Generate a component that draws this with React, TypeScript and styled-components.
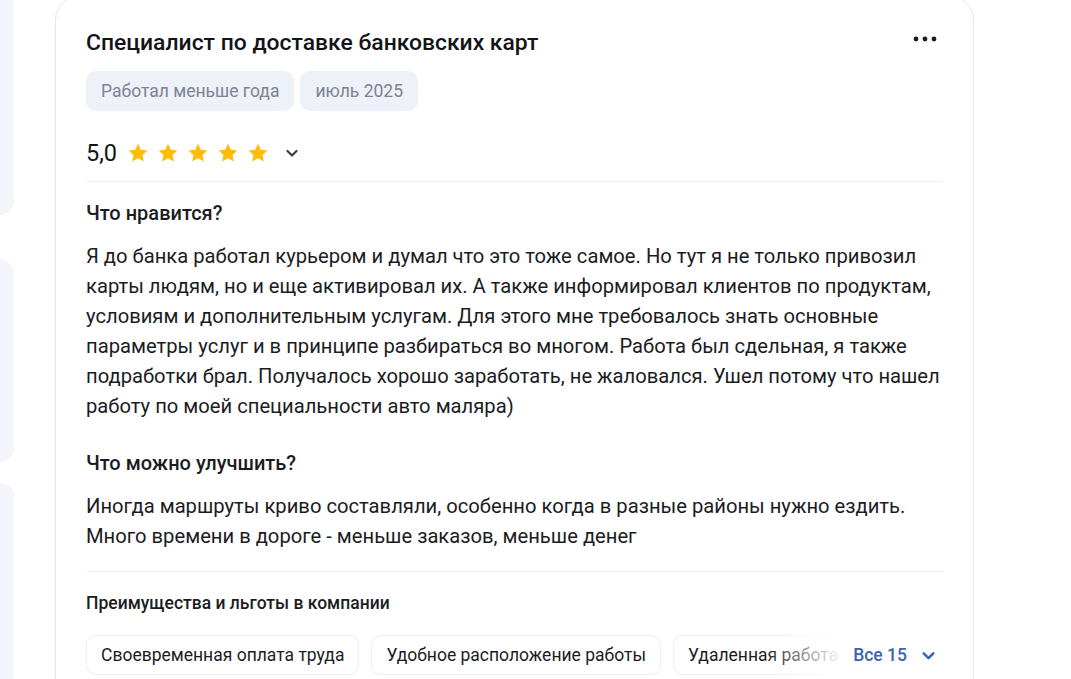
import React from "react";
import styled, { createGlobalStyle } from "styled-components";

const Global = createGlobalStyle`
  html, body { margin: 0; padding: 0; background: #ffffff; overflow: hidden; }
  body { font-family: Roboto, "Noto Sans", Arial, sans-serif; color: #1c1c1f; }
  * { box-sizing: border-box; }
`;

const Page = styled.div`
  display: flex;
  align-items: flex-start;
  gap: 41px;
  height: 679px;
  overflow: hidden;
`;

const SideColumn = styled.div`
  display: flex;
  flex-direction: column;
  width: 14px;
  margin-top: -40px;
`;

const SideCard = styled.div<{ $h: number; $gap: number }>`
  height: ${(p) => p.$h}px;
  margin-bottom: ${(p) => p.$gap}px;
  background: #f4f5fa;
  border-radius: 0 16px 16px 0;
`;

const Card = styled.div`
  width: 919px;
  margin-top: -4px;
  border: 1px solid #e2e5ec;
  border-radius: 24px;
  padding: 32px 30px 40px 30px;
  background: #fff;
`;

const Header = styled.div`
  display: flex;
  align-items: center;
  justify-content: space-between;
`;

const Title = styled.h2`
  margin: 0;
  font-size: 22.9px;
  line-height: 28px;
  font-weight: 500;
  color: #141416;
`;

const MoreButton = styled.button`
  display: flex;
  align-items: center;
  justify-content: center;
  width: 30px;
  height: 24px;
  border: 0;
  background: transparent;
  padding: 0;
  margin-top: -8px;
  margin-right: 3px;
  cursor: pointer;
`;

const Tags = styled.div`
  display: flex;
  gap: 6px;
  margin-top: 14px;
`;

const Tag = styled.span`
  display: inline-flex;
  align-items: center;
  height: 40px;
  padding: 0 15px;
  border-radius: 10px;
  background: #eef1f7;
  color: #7b8395;
  font-size: 17.5px;
`;

const RatingRow = styled.div`
  display: flex;
  align-items: center;
  height: 32px;
  margin-top: 26px;
`;

const RatingValue = styled.span`
  font-size: 23.5px;
  font-weight: 400;
  color: #141416;
  margin-right: 10px;
`;

const Stars = styled.div`
  display: flex;
  gap: 8px;
`;

const Chevron = styled.span<{ $color: string; $gap: number }>`
  display: inline-flex;
  margin-left: ${(p) => p.$gap}px;
  color: ${(p) => p.$color};
`;

const Divider = styled.div<{ $top: number }>`
  height: 1px;
  background: #eef0f4;
  margin-top: ${(p) => p.$top}px;
`;

const SectionTitle = styled.h3<{ $top: number }>`
  margin: ${(p) => p.$top}px 0 0 0;
  font-size: 20px;
  line-height: 24px;
  font-weight: 500;
  color: #1c1c1f;
`;

const Body = styled.p`
  margin: 16px 0 0 0;
  font-size: 20.2px;
  line-height: 30px;
  color: #1c1c1f;
`;

const BenefitsTitle = styled.h4`
  margin: 20px 0 0 0;
  font-size: 17.5px;
  line-height: 22px;
  font-weight: 500;
  color: #1c1c1f;
`;

const ChipsWrap = styled.div`
  position: relative;
  margin-top: 21px;
  height: 40px;
  overflow: hidden;
`;

const Chips = styled.div`
  display: flex;
  gap: 12px;
`;

const Chip = styled.span`
  flex: none;
  display: inline-flex;
  align-items: center;
  height: 40px;
  padding: 0 14px;
  border: 1px solid #eceef3;
  border-radius: 10px;
  background: #fff;
  color: #1c1c1f;
  font-size: 17.5px;
  white-space: nowrap;
`;

const AllOverlay = styled.div`
  position: absolute;
  top: 0;
  right: 0;
  height: 40px;
  display: flex;
  align-items: center;
  padding-left: 90px;
  padding-right: 7px;
  background: linear-gradient(to right, rgba(255,255,255,0) 0px, #fff 80px);
`;

const AllButton = styled.button`
  display: inline-flex;
  align-items: center;
  border: 0;
  background: transparent;
  padding: 0;
  font-family: inherit;
  font-size: 17.5px;
  font-weight: 500;
  color: #3a66ad;
  cursor: pointer;
`;

const Star = () => (
  <svg width="22" height="22" viewBox="0 0 24 24">
    <path
      d="M12 1.8l3.1 6.6 7.1.9-5.2 4.9 1.3 7.1L12 17.8l-6.3 3.5 1.3-7.1L1.8 9.3l7.1-.9z"
      fill="#ffbd0a"
    />
  </svg>
);

const ChevronDown = ({ size = 14, stroke = 2.2 }: { size?: number; stroke?: number }) => (
  <svg width={size} height={size} viewBox="0 0 14 14" fill="none">
    <path d="M2.5 5l4.5 4.5L11.5 5" stroke="currentColor" strokeWidth={stroke} strokeLinecap="round" strokeLinejoin="round" />
  </svg>
);

export default function App() {
  return (
    <>
      <Global />
      <Page>
        <SideColumn>
          <SideCard $h={255} $gap={45} />
          <SideCard $h={202} $gap={21} />
          <SideCard $h={300} $gap={0} />
        </SideColumn>
        <Card>
          <Header>
            <Title>Специалист по доставке банковских карт</Title>
            <MoreButton aria-label="Ещё">
              <svg width="24" height="6" viewBox="0 0 24 6">
                <circle cx="3" cy="3" r="2.4" fill="#1c1c1f" />
                <circle cx="12" cy="3" r="2.4" fill="#1c1c1f" />
                <circle cx="21" cy="3" r="2.4" fill="#1c1c1f" />
              </svg>
            </MoreButton>
          </Header>
          <Tags>
            <Tag>Работал меньше года</Tag>
            <Tag>июль 2025</Tag>
          </Tags>
          <RatingRow>
            <RatingValue>5,0</RatingValue>
            <Stars>
              <Star />
              <Star />
              <Star />
              <Star />
              <Star />
            </Stars>
            <Chevron $color="#3a3d44" $gap={16}>
              <ChevronDown />
            </Chevron>
          </RatingRow>
          <Divider $top={12} />
          <SectionTitle $top={19}>Что нравится?</SectionTitle>
          <Body>
            Я до банка работал курьером и думал что это тоже самое. Но тут я не только привозил карты людям, но и еще
            активировал их. А также информировал клиентов по продуктам, условиям и дополнительным услугам. Для этого мне
            требовалось знать основные параметры услуг и в принципе разбираться во многом. Работа был сдельная, я также
            подработки брал. Получалось хорошо заработать, не жаловался. Ушел потому что нашел работу по моей
            специальности авто маляра)
          </Body>
          <SectionTitle $top={30}>Что можно улучшить?</SectionTitle>
          <Body>
            Иногда маршруты криво составляли, особенно когда в разные районы нужно ездить. Много времени в дороге - меньше
            заказов, меньше денег
          </Body>
          <Divider $top={20} />
          <BenefitsTitle>Преимущества и льготы в компании</BenefitsTitle>
          <ChipsWrap>
            <Chips>
              <Chip>Своевременная оплата труда</Chip>
              <Chip>Удобное расположение работы</Chip>
              <Chip>Удаленная работа</Chip>
            </Chips>
            <AllOverlay>
              <AllButton>
                Все 15
                <Chevron $color="#3a66ad" $gap={14}>
                  <ChevronDown size={15} stroke={2.4} />
                </Chevron>
              </AllButton>
            </AllOverlay>
          </ChipsWrap>
        </Card>
      </Page>
    </>
  );
}
